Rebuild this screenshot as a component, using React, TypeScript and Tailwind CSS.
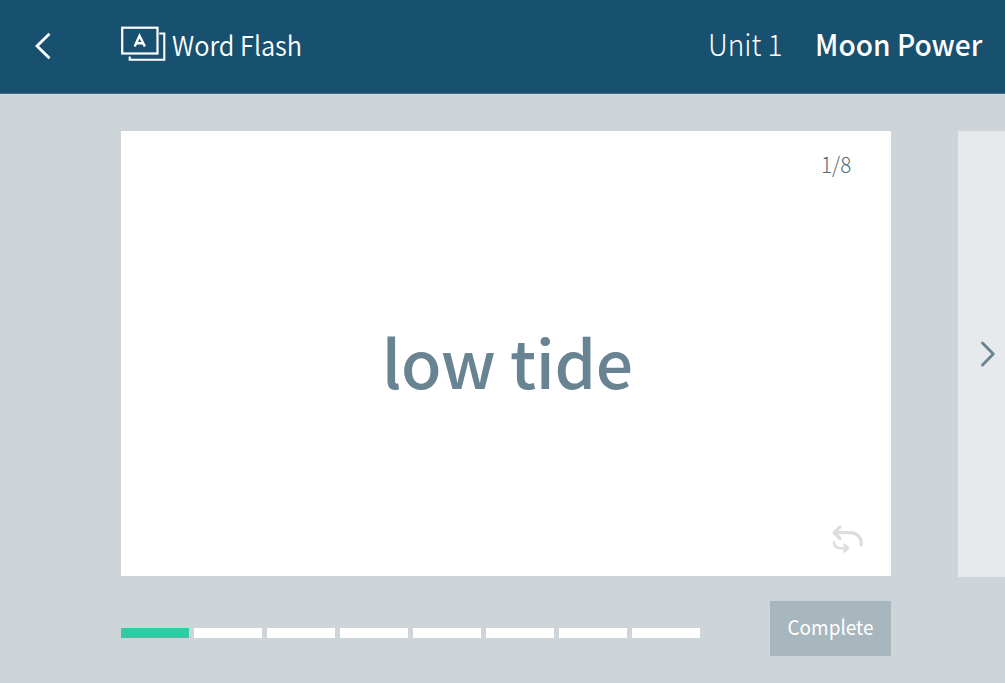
import clsx from "clsx";

const TOTAL_CARDS = 8;

function BackIcon() {
  return (
    <svg width="16" height="28" viewBox="0 0 16 28" fill="none" aria-hidden="true">
      <path d="M14.5 1.8L2 14L14.5 26.2" stroke="white" strokeWidth="2.8" />
    </svg>
  );
}

function NextIcon() {
  return (
    <svg width="16" height="28" viewBox="0 0 16 28" fill="none" aria-hidden="true">
      <path
        d="M2.5 3L13.3 14L2.5 25"
        stroke="#688391"
        strokeWidth="2.8"
        strokeLinecap="round"
        strokeLinejoin="round"
      />
    </svg>
  );
}

function FlashCardIcon() {
  return (
    <svg width="45" height="36" viewBox="0 0 45 36" fill="none" aria-hidden="true">
      <rect x="1.2" y="1.7" width="35.3" height="25.8" stroke="white" strokeWidth="2.2" />
      <path d="M38.3 7.5H43.3V33.8H8.7V30.5" stroke="white" strokeWidth="2.1" />
      <path d="M13.7 20.5L18.5 9.8L23.9 20.5M15.5 17.2H22" stroke="white" strokeWidth="2.4" />
    </svg>
  );
}

function FlipIcon() {
  return (
    <svg width="32" height="28" viewBox="0 0 32 28" fill="none" aria-hidden="true">
      <g stroke="#dddddd" strokeLinecap="round" strokeLinejoin="round">
        <path d="M8 2L2 7.7L8 13.5M2 7.7H17C25 7.7 29.3 12 29.3 20" strokeWidth="3.2" />
        <path d="M2 17.5C2.3 21.5 5 23.2 9 23.2H16M12.5 19.8L16 23.2L12.5 26.4" strokeWidth="2.6" />
      </g>
    </svg>
  );
}

function Header() {
  return (
    <header className="flex h-[94px] shrink-0 items-start border-b border-[#476f89] bg-[#18506f] text-white">
      <button className="ml-[35px] mt-8" aria-label="Back">
        <BackIcon />
      </button>
      <div className="ml-[70px] mt-[26px] flex">
        <FlashCardIcon />
        <span className="ml-[5.5px] origin-left scale-x-[0.94] text-[27px] font-[350] leading-[37px]">
          Word Flash
        </span>
      </div>
      <div className="ml-auto mr-[23px] mt-[23px] flex text-[29.5px] leading-10">
        <span className="mr-[24.5px] origin-right scale-x-[0.95] font-light">Unit 1</span>
        <span className="origin-right scale-x-[0.954] font-medium">Moon Power</span>
      </div>
    </header>
  );
}

function Progress({ current }: { current: number }) {
  return (
    <div className="mt-[52px] flex h-[10.5px] gap-[4.9px]">
      {Array.from({ length: TOTAL_CARDS }, (_, i) => (
        <div
          key={i}
          className={clsx("w-[68.1px]", i < current ? "bg-[#32c9a3]" : "bg-white")}
        />
      ))}
    </div>
  );
}

export default function App() {
  const current = 1;

  return (
    <div className="flex h-screen flex-col overflow-hidden bg-[#ced5d9] font-['Noto_Sans_CJK_KR',sans-serif]">
      <Header />
      <main className="flex justify-between pl-[121px] pt-[37px]">
        <div className="w-[769.5px]">
          <section className="flex h-[444.5px] flex-col bg-white">
            <span className="mr-[39.5px] mt-4 origin-right scale-x-[0.94] self-end text-[22px] font-light leading-8 text-[#526c7b]">
              {current}/{TOTAL_CARDS}
            </span>
            <h1 className="mt-[131px] pl-[3px] text-center text-[66px] font-medium leading-[100px] tracking-[-0.3px] text-[#688391]">
              low tide
            </h1>
            <button className="mb-[23px] mr-[27px] mt-auto self-end" aria-label="Flip card">
              <FlipIcon />
            </button>
          </section>
          <div className="flex justify-between">
            <Progress current={current} />
            <button className="mt-[25px] flex h-[55px] w-[121px] items-center justify-center bg-[#a8b6be] pb-1 text-[20.5px] leading-[30px] text-white">
              <span className="scale-x-[0.925]">Complete</span>
            </button>
          </div>
        </div>
        <button
          className="flex h-[445.5px] w-[47px] items-center bg-[#e6eaed] pl-[22px]"
          aria-label="Next card"
        >
          <NextIcon />
        </button>
      </main>
    </div>
  );
}
